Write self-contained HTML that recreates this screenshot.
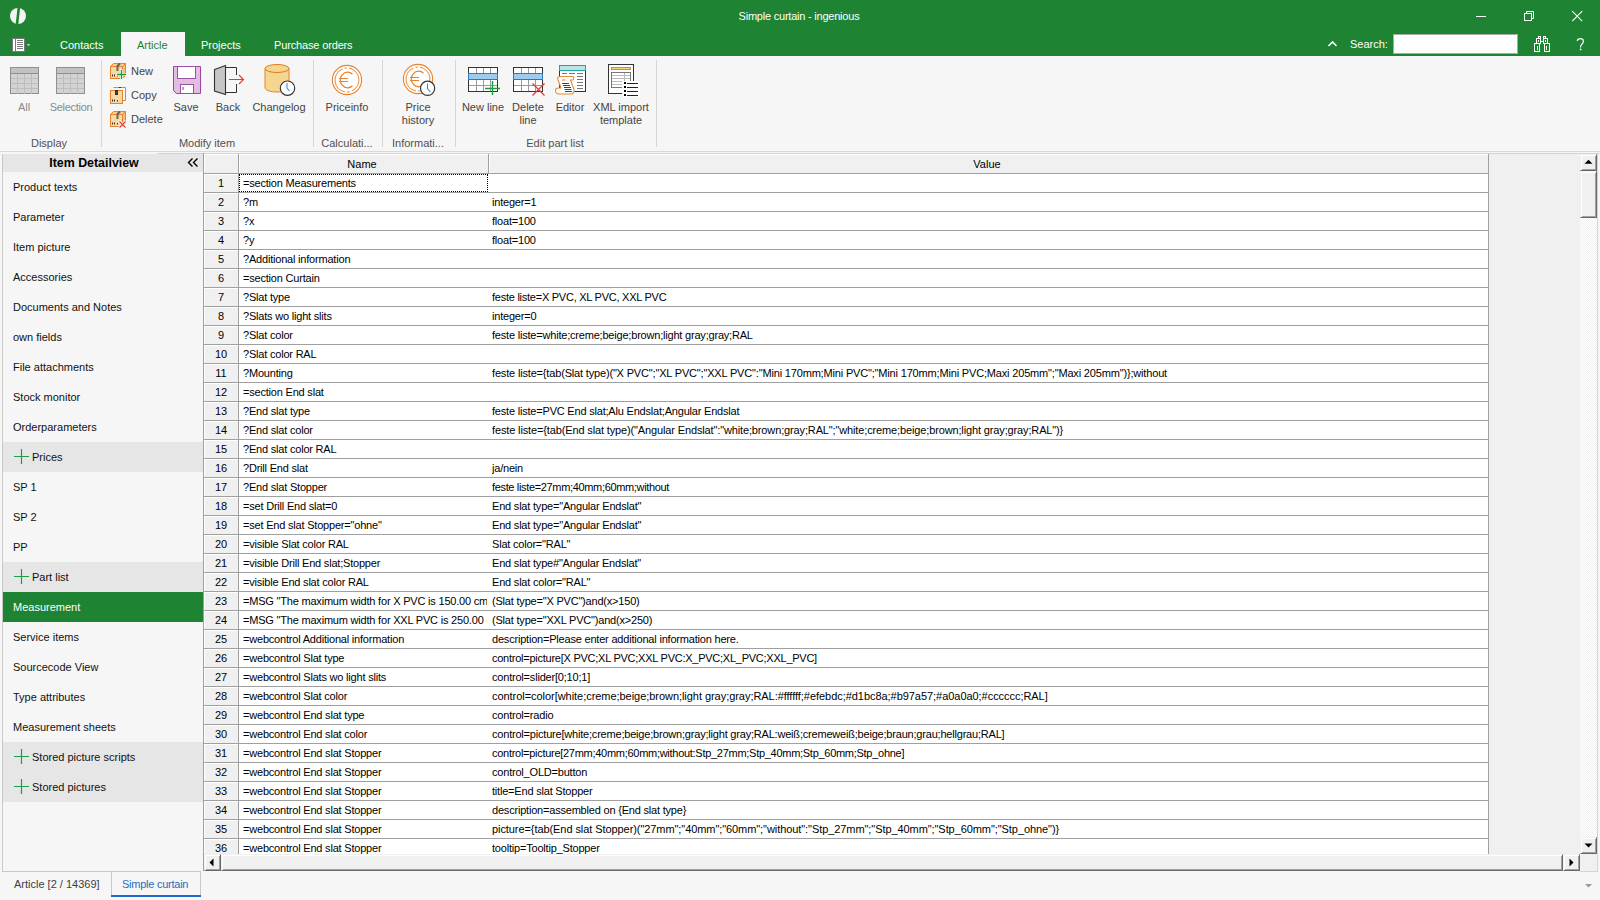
<!DOCTYPE html><html><head><meta charset="utf-8"><style>
html,body{margin:0;padding:0}
body{width:1600px;height:900px;overflow:hidden;position:relative;background:#f6f6f6;font-family:"Liberation Sans", sans-serif;font-size:11px;color:#000}
div{box-sizing:border-box}
.g{position:absolute;height:18px;line-height:18px;white-space:pre;overflow:hidden;color:#000}
.c{letter-spacing:-0.2px}
.t{position:absolute;white-space:pre;line-height:14px}
svg{position:absolute;overflow:visible}

</style></head><body>
<div style="position:absolute;left:0px;top:0px;width:1600px;height:56px;background:#1e8332"></div>
<svg style="left:0;top:0" width="40" height="32"><circle cx="18" cy="16" r="8" fill="#f4f4f4"/><path d="M17.6 7 L20.2 7 L18.2 25 L15.6 25 Z" fill="#1e8332"/></svg>
<div class="t" style="left:0px;top:9px;width:1598px;text-align:center;color:#ffffff;font-size:11px;letter-spacing:-0.22px;">Simple curtain - ingenious</div>
<svg style="left:1470;top:0" width="130" height="32"><line x1="6" y1="16.5" x2="16" y2="16.5" stroke="#fff" stroke-width="1"/><rect x="54.5" y="13.5" width="7" height="7" fill="none" stroke="#fff"/><path d="M56.5 13.5 V11.5 H63.5 V18.5 H61.5" fill="none" stroke="#fff"/><path d="M102.2 11.2 L112.2 21.2 M112.2 11.2 L102.2 21.2" stroke="#fff" stroke-width="1.1"/></svg>
<svg style="left:0;top:0" width="40" height="56"><rect x="12.5" y="38.5" width="12" height="13" fill="#fff" stroke="#7a7a7a"/><rect x="12.5" y="38.5" width="3" height="13" fill="#fff" stroke="#7a7a7a"/><path d="M17 40.5h6M17 42.5h6M17 44.5h6M17 46.5h6M17 48.5h6" stroke="#7a7a7a"/><path d="M26.5 44 h4 l-2 2.5z" fill="#bbb"/></svg>
<div style="position:absolute;left:121px;top:32px;width:64px;height:24px;background:#f6f6f6"></div>
<div class="t" style="left:60px;top:38px;color:#fff">Contacts</div>
<div class="t" style="left:137px;top:38px;color:#1e8332">Article</div>
<div class="t" style="left:201px;top:38px;color:#fff">Projects</div>
<div class="t" style="left:274px;top:38px;color:#fff;letter-spacing:-0.15px">Purchase orders</div>
<svg style="left:1320;top:28" width="20" height="20"><path d="M8.5 18 L12.5 14 L16.5 18" fill="none" stroke="#fff" stroke-width="1.6"/></svg>
<div class="t" style="left:1350px;top:37px;color:#fff">Search:</div>
<div style="position:absolute;left:1393px;top:34px;width:125px;height:20px;background:#fff;border:1px solid #a9a9a9"></div>
<svg style="left:1526px;top:30px" width="30" height="26"><rect x="8.5" y="13.5" width="5" height="8" fill="none" stroke="#fff"/><rect x="18.5" y="13.5" width="5" height="8" fill="none" stroke="#fff"/><rect x="10.5" y="8.5" width="4" height="5" fill="none" stroke="#fff"/><rect x="17.5" y="8.5" width="4" height="5" fill="none" stroke="#fff"/><rect x="12.5" y="6.5" width="2" height="2" fill="none" stroke="#fff"/><rect x="17.5" y="6.5" width="2" height="2" fill="none" stroke="#fff"/><path d="M15 11.5h2" stroke="#fff"/><path d="M11.5 16v4M20.5 16v4M12.5 10v2M19.5 10v2" stroke="#fff"/></svg>
<svg style="left:1570px;top:30px" width="20" height="24"><path d="M7.2 10.8C7.8 8.3 13.4 7.4 13.4 11.3C13.4 14 10.6 14.4 10.6 16.6V17.6" fill="none" stroke="#fff" stroke-width="1.2"/><circle cx="10.6" cy="19.4" r="0.9" fill="#fff"/></svg>
<div style="position:absolute;left:0px;top:151px;width:1600px;height:1px;background:#d9d9d9"></div>
<div style="position:absolute;left:101px;top:60px;width:1px;height:87px;background:#d6d6d6"></div>
<div style="position:absolute;left:313px;top:60px;width:1px;height:87px;background:#d6d6d6"></div>
<div style="position:absolute;left:382px;top:60px;width:1px;height:87px;background:#d6d6d6"></div>
<div style="position:absolute;left:455px;top:60px;width:1px;height:87px;background:#d6d6d6"></div>
<div style="position:absolute;left:656px;top:60px;width:1px;height:87px;background:#d6d6d6"></div>
<svg style="left:10px;top:67px" width="30" height="28"><rect x="0.5" y="0.5" width="28" height="26" fill="#d3d3d3" stroke="#8f8f8f"/><rect x="1" y="1" width="27" height="5" fill="#c2c2c2"/><line x1="1" y1="6.5" x2="28" y2="6.5" stroke="#8f8f8f"/><line x1="1" y1="11.5" x2="28" y2="11.5" stroke="#bdbdbd"/><line x1="7.5" y1="7" x2="7.5" y2="27" stroke="#bdbdbd"/><line x1="1" y1="16.5" x2="28" y2="16.5" stroke="#bdbdbd"/><line x1="14.5" y1="7" x2="14.5" y2="27" stroke="#bdbdbd"/><line x1="1" y1="21.5" x2="28" y2="21.5" stroke="#bdbdbd"/><line x1="21.5" y1="7" x2="21.5" y2="27" stroke="#bdbdbd"/></svg>
<svg style="left:56px;top:67px" width="30" height="28"><rect x="0.5" y="0.5" width="28" height="26" fill="#d3d3d3" stroke="#8f8f8f"/><rect x="1" y="1" width="27" height="5" fill="#c2c2c2"/><line x1="1" y1="6.5" x2="28" y2="6.5" stroke="#8f8f8f"/><line x1="1" y1="11.5" x2="28" y2="11.5" stroke="#bdbdbd"/><line x1="7.5" y1="7" x2="7.5" y2="27" stroke="#bdbdbd"/><line x1="1" y1="16.5" x2="28" y2="16.5" stroke="#bdbdbd"/><line x1="14.5" y1="7" x2="14.5" y2="27" stroke="#bdbdbd"/><line x1="1" y1="21.5" x2="28" y2="21.5" stroke="#bdbdbd"/><line x1="21.5" y1="7" x2="21.5" y2="27" stroke="#bdbdbd"/></svg>
<div class="t" style="left:-36px;top:100px;width:120px;text-align:center;color:#8a8a8a;font-size:11px">All</div>
<div class="t" style="left:11px;top:100px;width:120px;text-align:center;color:#8a8a8a;letter-spacing:-0.3px">Selection</div>
<div class="t" style="left:-11px;top:136px;width:120px;text-align:center;color:#505050;font-size:11px">Display</div>
<svg style="left:108px;top:61px" width="20" height="20"><path d="M2.5 5.5l3-3h12l-3 3z" fill="#f6cf8c" stroke="#e8822e"/><path d="M14.5 5.5l3-3v12l-3 3z" fill="#f3c27a" stroke="#e8822e"/><rect x="2.5" y="5.5" width="12" height="12" fill="#f8d9a0" stroke="#e8822e"/><path d="M12 2.5L9.5 5v5" fill="none" stroke="#666" stroke-width="2"/><path d="M4.5 13.5v2M6.5 13.5v2M9.5 14v1.5" stroke="#333"/><path d="M13.5 8.5v10M8.5 13.5h10" stroke="#f6f6f6" stroke-width="3"/><path d="M13.5 9v9M9 13.5h9" stroke="#1a9c3a" stroke-width="1.3"/></svg>
<svg style="left:108px;top:86px" width="20" height="20"><path d="M5.5 1.5h12v13h-3" fill="none" stroke="#e8822e"/><rect x="2.5" y="4.5" width="12" height="13" fill="#f8d9a0" stroke="#e8822e"/><rect x="7.5" y="4.5" width="2" height="4" fill="#444" stroke="#333"/><path d="M11 1.5h2" stroke="#333"/><path d="M4.5 13.5v2M6.5 13.5v2M9.5 14v1.5" stroke="#333"/></svg>
<svg style="left:108px;top:109px" width="20" height="20"><path d="M2.5 5.5l3-3h12l-3 3z" fill="#f6cf8c" stroke="#e8822e"/><path d="M14.5 5.5l3-3v12l-3 3z" fill="#f3c27a" stroke="#e8822e"/><rect x="2.5" y="5.5" width="12" height="12" fill="#f8d9a0" stroke="#e8822e"/><path d="M12 2.5L9.5 5v5" fill="none" stroke="#666" stroke-width="2"/><path d="M4.5 13.5v2M6.5 13.5v2M9.5 14v1.5" stroke="#333"/><path d="M11 12l7 7M18 12l-7 7" stroke="#f6f6f6" stroke-width="3"/><path d="M11.5 12.5l6 6M17.5 12.5l-6 6" stroke="#e53935" stroke-width="1.1"/></svg>
<div class="t" style="left:131px;top:64px;color:#444444">New</div>
<div class="t" style="left:131px;top:88px;color:#444444">Copy</div>
<div class="t" style="left:131px;top:112px;color:#444444">Delete</div>
<svg style="left:173px;top:66px" width="30" height="30"><path d="M0.5 0.5h27v27h-24l-3-3z" fill="#e2bde0" stroke="#a044a4"/><rect x="4.5" y="0.5" width="18" height="12" fill="#fff" stroke="#9b4fa8"/><rect x="7.5" y="18.5" width="13" height="9" fill="#fff" stroke="#9b4fa8"/><line x1="10" y1="21" x2="10" y2="24" stroke="#555"/></svg>
<div class="t" style="left:126px;top:100px;width:120px;text-align:center;color:#444444;font-size:11px">Save</div>
<svg style="left:213px;top:64px" width="34" height="34"><path d="M1.5 5.5L12.5 1.5V30.5L1.5 27z" fill="#c6c6c6" stroke="#333" stroke-width="1.1"/><path d="M13 3.5H23.5V11M23.5 20V28.5H13" fill="none" stroke="#333"/><path d="M16 15.5H30.5M26 11L30.5 15.5 26 20" fill="none" stroke="#e53935" stroke-width="1.1"/></svg>
<div class="t" style="left:168px;top:100px;width:120px;text-align:center;color:#444444;font-size:11px">Back</div>
<svg style="left:264px;top:63px" width="34" height="34"><path d="M1 5.5v19c0 3 6 4.5 12 4.5s12-1.5 12-4.5v-19" fill="#f5d68e" stroke="#e8822e"/><ellipse cx="13" cy="5.5" rx="12" ry="4" fill="#f5d68e" stroke="#e07b20"/><circle cx="23.5" cy="25.2" r="7.2" fill="#fff" stroke="#333" stroke-width="1.2"/><path d="M23 20v5l2.5 2.8" fill="none" stroke="#3a8ee6" stroke-width="1.1"/></svg>
<div class="t" style="left:219px;top:100px;width:120px;text-align:center;color:#444444;font-size:11px">Changelog</div>
<div class="t" style="left:147px;top:136px;width:120px;text-align:center;color:#505050;font-size:11px">Modify item</div>
<svg style="left:330px;top:63px" width="34" height="34"><circle cx="17" cy="17" r="14.6" fill="#fff" stroke="#e8822e" stroke-width="1.1"/><circle cx="17" cy="17" r="12" fill="none" stroke="#e8822e" stroke-width="0.9" stroke-dasharray="30.7 2 3 2" stroke-dashoffset="-4" transform="rotate(-100 17 17)"/><path d="M22.5 11.2A7.3 7.8 0 1 0 22.5 22.8" fill="none" stroke="#e8822e" stroke-width="1.3"/><path d="M9 15.5h9M9 18.5h9" stroke="#e8822e" stroke-width="1.2"/></svg>
<div class="t" style="left:287px;top:100px;width:120px;text-align:center;color:#444444;font-size:11px">Priceinfo</div>
<div class="t" style="left:287px;top:136px;width:120px;text-align:center;color:#505050;font-size:11px">Calculati...</div>
<svg style="left:401px;top:62px" width="34" height="34"><circle cx="17" cy="17" r="14.6" fill="#fff" stroke="#e8822e" stroke-width="1.1"/><circle cx="17" cy="17" r="12" fill="none" stroke="#e8822e" stroke-width="0.9" stroke-dasharray="30.7 2 3 2" stroke-dashoffset="-4" transform="rotate(-100 17 17)"/><path d="M22.5 11.2A7.3 7.8 0 1 0 22.5 22.8" fill="none" stroke="#e8822e" stroke-width="1.3"/><path d="M9 15.5h9M9 18.5h9" stroke="#e8822e" stroke-width="1.2"/></svg>
<svg style="left:417px;top:78px" width="22" height="22"><circle cx="10.6" cy="10.3" r="7.1" fill="#fff" stroke="#333" stroke-width="1.2"/><path d="M10.5 5.5v5l2.8 3.5" fill="none" stroke="#2f8ad8" stroke-width="1.1"/></svg>
<div class="t" style="left:358px;top:100px;width:120px;text-align:center;color:#444444;font-size:11px">Price</div>
<div class="t" style="left:358px;top:113px;width:120px;text-align:center;color:#444444;font-size:11px">history</div>
<div class="t" style="left:358px;top:136px;width:120px;text-align:center;color:#505050;font-size:11px">Informati...</div>
<svg style="left:468px;top:67px" width="34" height="32"><rect x="0.5" y="0.5" width="29" height="24" fill="#fff" stroke="#333"/><rect x="0.5" y="6.5" width="29" height="6" fill="#9ccbf0" stroke="#2a78c8"/><line x1="8.5" y1="1" x2="8.5" y2="6" stroke="#999"/><line x1="8.5" y1="13" x2="8.5" y2="24" stroke="#999"/><line x1="15.5" y1="1" x2="15.5" y2="6" stroke="#999"/><line x1="15.5" y1="13" x2="15.5" y2="24" stroke="#999"/><line x1="22.5" y1="1" x2="22.5" y2="6" stroke="#999"/><line x1="22.5" y1="13" x2="22.5" y2="24" stroke="#999"/><line x1="1" y1="18.5" x2="29" y2="18.5" stroke="#999"/><path d="M24.5 14v14M17 21.5h15" stroke="#1a9c3a" stroke-width="1.4"/></svg>
<svg style="left:513px;top:67px" width="34" height="32"><rect x="0.5" y="0.5" width="29" height="24" fill="#fff" stroke="#333"/><rect x="0.5" y="6.5" width="29" height="6" fill="#9ccbf0" stroke="#2a78c8"/><line x1="8.5" y1="1" x2="8.5" y2="6" stroke="#999"/><line x1="8.5" y1="13" x2="8.5" y2="24" stroke="#999"/><line x1="15.5" y1="1" x2="15.5" y2="6" stroke="#999"/><line x1="15.5" y1="13" x2="15.5" y2="24" stroke="#999"/><line x1="22.5" y1="1" x2="22.5" y2="6" stroke="#999"/><line x1="22.5" y1="13" x2="22.5" y2="24" stroke="#999"/><line x1="1" y1="18.5" x2="29" y2="18.5" stroke="#999"/><path d="M19.5 16.5l12 12M31.5 16.5l-12 12" stroke="#e53935" stroke-width="1.3"/></svg>
<div class="t" style="left:423px;top:100px;width:120px;text-align:center;color:#444444;font-size:11px">New line</div>
<div class="t" style="left:468px;top:100px;width:120px;text-align:center;color:#444444;font-size:11px">Delete</div>
<div class="t" style="left:468px;top:113px;width:120px;text-align:center;color:#444444;font-size:11px">line</div>
<svg style="left:552px;top:60px" width="40" height="40"><rect x="7.5" y="5.5" width="26" height="26" fill="#fff" stroke="#333"/><rect x="7.5" y="5.5" width="26" height="5" fill="#c2e3e3" stroke="#1fa3ab"/><path d="M10 13.5h5M17 13.5h6M25 13.5h6M25 16.5h6M25 19.5h6M25 22.5h6M25 25.5h6M25 28.5h6" stroke="#777"/><path d="M9 16.5h11.5c1.5 0 2 3 0 3.5h-2l3.5 9.5c0.7 2.5-1 4.5-3 4.5h-12c-2 0-3.5-1.5-3.5-3.5s1.5-2.5 3-2.5h2.5l-3-8c-1-2.5 0-3.5 3-3.5z" fill="#fff" stroke="#ea8a35" stroke-width="1.1"/><path d="M10 20h3.5" stroke="#ea8a35"/><path d="M10 23.5h7M11 25.5h7M12 27.5h7M12.5 29.5h7M13 31.5h7" stroke="#444"/></svg>
<div class="t" style="left:510px;top:100px;width:120px;text-align:center;color:#444444;font-size:11px">Editor</div>
<svg style="left:604px;top:60px" width="40" height="40"><rect x="4.5" y="4.5" width="25" height="29" fill="#fff" stroke="#333"/><rect x="7.5" y="7.5" width="19" height="2" fill="#f6d47a" stroke="#e8822e"/><rect x="7.5" y="12.5" width="19" height="15" fill="#fff" stroke="#777"/><path d="M8 15.5h18M8 18.5h18M8 21.5h18M8 24.5h18M20.5 13v14" stroke="#bbb"/><rect x="18" y="21" width="18" height="16" fill="#fff"/><path d="M20 23h2M20 27h2M20 31h2M20 35h2" stroke="#000" stroke-width="2"/><path d="M23 23.5h11M23 27.5h11M23 31.5h11M23 35.5h11" stroke="#222"/></svg>
<div class="t" style="left:561px;top:100px;width:120px;text-align:center;color:#444444;font-size:11px">XML import</div>
<div class="t" style="left:561px;top:113px;width:120px;text-align:center;color:#444444;font-size:11px">template</div>
<div class="t" style="left:495px;top:136px;width:120px;text-align:center;color:#505050;font-size:11px">Edit part list</div>
<div style="position:absolute;left:157px;top:153px;width:1443px;height:1px;background:#d4d4d4"></div>
<div style="position:absolute;left:2px;top:154px;width:1px;height:718px;background:#c8c8c8"></div>
<div style="position:absolute;left:2px;top:871px;width:110px;height:1px;background:#c8c8c8"></div>
<div style="position:absolute;left:3px;top:154px;width:200px;height:18px;background:#e6e6e6"></div>
<div class="t" style="left:3px;top:156px;width:182px;text-align:center;font-weight:bold;font-size:12.4px;color:#000">Item Detailview</div>
<svg style="left:186px;top:156px" width="14" height="14"><path d="M6.5 2.5L2.5 6.5 6.5 10.5M11.5 2.5L7.5 6.5 11.5 10.5" fill="none" stroke="#000" stroke-width="1.4"/></svg>
<div class="t" style="left:13px;top:180px;color:#111">Product texts</div>
<div class="t" style="left:13px;top:210px;color:#111">Parameter</div>
<div class="t" style="left:13px;top:240px;color:#111">Item picture</div>
<div class="t" style="left:13px;top:270px;color:#111">Accessories</div>
<div class="t" style="left:13px;top:300px;color:#111">Documents and Notes</div>
<div class="t" style="left:13px;top:330px;color:#111">own fields</div>
<div class="t" style="left:13px;top:360px;color:#111">File attachments</div>
<div class="t" style="left:13px;top:390px;color:#111">Stock monitor</div>
<div class="t" style="left:13px;top:420px;color:#111">Orderparameters</div>
<div style="position:absolute;left:3px;top:442px;width:200px;height:30px;background:#e6e6e6"></div>
<svg style="left:14px;top:449px" width="16" height="16"><path d="M7.5 0v15M0 7.5h15" stroke="#1fa048" stroke-width="1.2"/></svg>
<div class="t" style="left:32px;top:450px;color:#111">Prices</div>
<div class="t" style="left:13px;top:480px;color:#111">SP 1</div>
<div class="t" style="left:13px;top:510px;color:#111">SP 2</div>
<div class="t" style="left:13px;top:540px;color:#111">PP</div>
<div style="position:absolute;left:3px;top:562px;width:200px;height:30px;background:#e6e6e6"></div>
<svg style="left:14px;top:569px" width="16" height="16"><path d="M7.5 0v15M0 7.5h15" stroke="#1fa048" stroke-width="1.2"/></svg>
<div class="t" style="left:32px;top:570px;color:#111">Part list</div>
<div style="position:absolute;left:3px;top:592px;width:200px;height:30px;background:#1e8332"></div>
<div class="t" style="left:13px;top:600px;color:#fff">Measurement</div>
<div class="t" style="left:13px;top:630px;color:#111">Service items</div>
<div class="t" style="left:13px;top:660px;color:#111">Sourcecode View</div>
<div class="t" style="left:13px;top:690px;color:#111">Type attributes</div>
<div class="t" style="left:13px;top:720px;color:#111">Measurement sheets</div>
<div style="position:absolute;left:3px;top:742px;width:200px;height:30px;background:#e6e6e6"></div>
<svg style="left:14px;top:749px" width="16" height="16"><path d="M7.5 0v15M0 7.5h15" stroke="#1fa048" stroke-width="1.2"/></svg>
<div class="t" style="left:32px;top:750px;color:#111">Stored picture scripts</div>
<div style="position:absolute;left:3px;top:772px;width:200px;height:30px;background:#e6e6e6"></div>
<svg style="left:14px;top:779px" width="16" height="16"><path d="M7.5 0v15M0 7.5h15" stroke="#1fa048" stroke-width="1.2"/></svg>
<div class="t" style="left:32px;top:780px;color:#111">Stored pictures</div>
<div style="position:absolute;left:203px;top:153px;width:1px;height:718px;background:#a0a0a0"></div>
<div style="position:absolute;left:1488px;top:154px;width:92px;height:700px;background:#f0f0f0"></div>
<div style="position:absolute;left:204px;top:154px;width:1284px;height:19px;background:#f0f0f0"></div>
<div style="position:absolute;left:204px;top:154px;width:34px;height:1px;background:#fff"></div>
<div style="position:absolute;left:204px;top:154px;width:1px;height:19px;background:#fff"></div>
<div style="position:absolute;left:239px;top:154px;width:249px;height:1px;background:#fff"></div>
<div style="position:absolute;left:239px;top:154px;width:1px;height:19px;background:#fff"></div>
<div style="position:absolute;left:489px;top:154px;width:999px;height:1px;background:#fff"></div>
<div style="position:absolute;left:489px;top:154px;width:1px;height:19px;background:#fff"></div>
<div style="position:absolute;left:238px;top:154px;width:1px;height:700px;background:#a0a0a0"></div>
<div style="position:absolute;left:488px;top:154px;width:1px;height:700px;background:#a0a0a0"></div>
<div style="position:absolute;left:1488px;top:154px;width:1px;height:700px;background:#a0a0a0"></div>
<div class="t" style="left:239px;top:157px;width:246px;text-align:center;color:#000">Name</div>
<div class="t" style="left:489px;top:157px;width:996px;text-align:center;color:#000">Value</div>
<div style="position:absolute;left:204px;top:173px;width:1284px;height:1px;background:#a0a0a0"></div>
<div style="position:absolute;left:239px;top:174px;width:1249px;height:680px;background:#fff"></div>
<div style="position:absolute;left:204px;top:174px;width:34px;height:680px;background:#f0f0f0"></div>
<div style="position:absolute;left:204px;top:192px;width:1284px;height:1px;background:#a0a0a0"></div>
<div style="position:absolute;left:204px;top:174px;width:34px;height:1px;background:#fff"></div>
<div style="position:absolute;left:204px;top:174px;width:1px;height:18px;background:#fff"></div>
<div class="g" style="left:204px;top:174px;width:34px;text-align:center">1</div>
<div class="g c" style="left:243px;top:174px;width:244px">=section Measurements</div>
<div style="position:absolute;left:204px;top:211px;width:1284px;height:1px;background:#a0a0a0"></div>
<div style="position:absolute;left:204px;top:193px;width:34px;height:1px;background:#fff"></div>
<div style="position:absolute;left:204px;top:193px;width:1px;height:18px;background:#fff"></div>
<div class="g" style="left:204px;top:193px;width:34px;text-align:center">2</div>
<div class="g c" style="left:243px;top:193px;width:244px">?m</div>
<div class="g c" style="left:492px;top:193px;width:994px;letter-spacing:-0.2px">integer=1</div>
<div style="position:absolute;left:204px;top:230px;width:1284px;height:1px;background:#a0a0a0"></div>
<div style="position:absolute;left:204px;top:212px;width:34px;height:1px;background:#fff"></div>
<div style="position:absolute;left:204px;top:212px;width:1px;height:18px;background:#fff"></div>
<div class="g" style="left:204px;top:212px;width:34px;text-align:center">3</div>
<div class="g c" style="left:243px;top:212px;width:244px">?x</div>
<div class="g c" style="left:492px;top:212px;width:994px;letter-spacing:-0.2px">float=100</div>
<div style="position:absolute;left:204px;top:249px;width:1284px;height:1px;background:#a0a0a0"></div>
<div style="position:absolute;left:204px;top:231px;width:34px;height:1px;background:#fff"></div>
<div style="position:absolute;left:204px;top:231px;width:1px;height:18px;background:#fff"></div>
<div class="g" style="left:204px;top:231px;width:34px;text-align:center">4</div>
<div class="g c" style="left:243px;top:231px;width:244px">?y</div>
<div class="g c" style="left:492px;top:231px;width:994px;letter-spacing:-0.2px">float=100</div>
<div style="position:absolute;left:204px;top:268px;width:1284px;height:1px;background:#a0a0a0"></div>
<div style="position:absolute;left:204px;top:250px;width:34px;height:1px;background:#fff"></div>
<div style="position:absolute;left:204px;top:250px;width:1px;height:18px;background:#fff"></div>
<div class="g" style="left:204px;top:250px;width:34px;text-align:center">5</div>
<div class="g c" style="left:243px;top:250px;width:244px">?Additional information</div>
<div style="position:absolute;left:204px;top:287px;width:1284px;height:1px;background:#a0a0a0"></div>
<div style="position:absolute;left:204px;top:269px;width:34px;height:1px;background:#fff"></div>
<div style="position:absolute;left:204px;top:269px;width:1px;height:18px;background:#fff"></div>
<div class="g" style="left:204px;top:269px;width:34px;text-align:center">6</div>
<div class="g c" style="left:243px;top:269px;width:244px">=section Curtain</div>
<div style="position:absolute;left:204px;top:306px;width:1284px;height:1px;background:#a0a0a0"></div>
<div style="position:absolute;left:204px;top:288px;width:34px;height:1px;background:#fff"></div>
<div style="position:absolute;left:204px;top:288px;width:1px;height:18px;background:#fff"></div>
<div class="g" style="left:204px;top:288px;width:34px;text-align:center">7</div>
<div class="g c" style="left:243px;top:288px;width:244px">?Slat type</div>
<div class="g c" style="left:492px;top:288px;width:994px;letter-spacing:-0.25px">feste liste=X PVC, XL PVC, XXL PVC</div>
<div style="position:absolute;left:204px;top:325px;width:1284px;height:1px;background:#a0a0a0"></div>
<div style="position:absolute;left:204px;top:307px;width:34px;height:1px;background:#fff"></div>
<div style="position:absolute;left:204px;top:307px;width:1px;height:18px;background:#fff"></div>
<div class="g" style="left:204px;top:307px;width:34px;text-align:center">8</div>
<div class="g c" style="left:243px;top:307px;width:244px">?Slats wo light slits</div>
<div class="g c" style="left:492px;top:307px;width:994px;letter-spacing:-0.2px">integer=0</div>
<div style="position:absolute;left:204px;top:344px;width:1284px;height:1px;background:#a0a0a0"></div>
<div style="position:absolute;left:204px;top:326px;width:34px;height:1px;background:#fff"></div>
<div style="position:absolute;left:204px;top:326px;width:1px;height:18px;background:#fff"></div>
<div class="g" style="left:204px;top:326px;width:34px;text-align:center">9</div>
<div class="g c" style="left:243px;top:326px;width:244px">?Slat color</div>
<div class="g c" style="left:492px;top:326px;width:994px;letter-spacing:-0.2px">feste liste=white;creme;beige;brown;light gray;gray;RAL</div>
<div style="position:absolute;left:204px;top:363px;width:1284px;height:1px;background:#a0a0a0"></div>
<div style="position:absolute;left:204px;top:345px;width:34px;height:1px;background:#fff"></div>
<div style="position:absolute;left:204px;top:345px;width:1px;height:18px;background:#fff"></div>
<div class="g" style="left:204px;top:345px;width:34px;text-align:center">10</div>
<div class="g c" style="left:243px;top:345px;width:244px">?Slat color RAL</div>
<div style="position:absolute;left:204px;top:382px;width:1284px;height:1px;background:#a0a0a0"></div>
<div style="position:absolute;left:204px;top:364px;width:34px;height:1px;background:#fff"></div>
<div style="position:absolute;left:204px;top:364px;width:1px;height:18px;background:#fff"></div>
<div class="g" style="left:204px;top:364px;width:34px;text-align:center">11</div>
<div class="g c" style="left:243px;top:364px;width:244px">?Mounting</div>
<div class="g c" style="left:492px;top:364px;width:994px;letter-spacing:-0.17px">feste liste={tab(Slat type)(&quot;X PVC&quot;;&quot;XL PVC&quot;;&quot;XXL PVC&quot;:&quot;Mini 170mm;Mini PVC&quot;;&quot;Mini 170mm;Mini PVC;Maxi 205mm&quot;;&quot;Maxi 205mm&quot;)};without</div>
<div style="position:absolute;left:204px;top:401px;width:1284px;height:1px;background:#a0a0a0"></div>
<div style="position:absolute;left:204px;top:383px;width:34px;height:1px;background:#fff"></div>
<div style="position:absolute;left:204px;top:383px;width:1px;height:18px;background:#fff"></div>
<div class="g" style="left:204px;top:383px;width:34px;text-align:center">12</div>
<div class="g c" style="left:243px;top:383px;width:244px">=section End slat</div>
<div style="position:absolute;left:204px;top:420px;width:1284px;height:1px;background:#a0a0a0"></div>
<div style="position:absolute;left:204px;top:402px;width:34px;height:1px;background:#fff"></div>
<div style="position:absolute;left:204px;top:402px;width:1px;height:18px;background:#fff"></div>
<div class="g" style="left:204px;top:402px;width:34px;text-align:center">13</div>
<div class="g c" style="left:243px;top:402px;width:244px">?End slat type</div>
<div class="g c" style="left:492px;top:402px;width:994px;letter-spacing:-0.2px">feste liste=PVC End slat;Alu Endslat;Angular Endslat</div>
<div style="position:absolute;left:204px;top:439px;width:1284px;height:1px;background:#a0a0a0"></div>
<div style="position:absolute;left:204px;top:421px;width:34px;height:1px;background:#fff"></div>
<div style="position:absolute;left:204px;top:421px;width:1px;height:18px;background:#fff"></div>
<div class="g" style="left:204px;top:421px;width:34px;text-align:center">14</div>
<div class="g c" style="left:243px;top:421px;width:244px">?End slat color</div>
<div class="g c" style="left:492px;top:421px;width:994px;letter-spacing:-0.136px">feste liste={tab(End slat type)(&quot;Angular Endslat&quot;:&quot;white;brown;gray;RAL&quot;;&quot;white;creme;beige;brown;light gray;gray;RAL&quot;)}</div>
<div style="position:absolute;left:204px;top:458px;width:1284px;height:1px;background:#a0a0a0"></div>
<div style="position:absolute;left:204px;top:440px;width:34px;height:1px;background:#fff"></div>
<div style="position:absolute;left:204px;top:440px;width:1px;height:18px;background:#fff"></div>
<div class="g" style="left:204px;top:440px;width:34px;text-align:center">15</div>
<div class="g c" style="left:243px;top:440px;width:244px">?End slat color RAL</div>
<div style="position:absolute;left:204px;top:477px;width:1284px;height:1px;background:#a0a0a0"></div>
<div style="position:absolute;left:204px;top:459px;width:34px;height:1px;background:#fff"></div>
<div style="position:absolute;left:204px;top:459px;width:1px;height:18px;background:#fff"></div>
<div class="g" style="left:204px;top:459px;width:34px;text-align:center">16</div>
<div class="g c" style="left:243px;top:459px;width:244px">?Drill End slat</div>
<div class="g c" style="left:492px;top:459px;width:994px;letter-spacing:-0.2px">ja/nein</div>
<div style="position:absolute;left:204px;top:496px;width:1284px;height:1px;background:#a0a0a0"></div>
<div style="position:absolute;left:204px;top:478px;width:34px;height:1px;background:#fff"></div>
<div style="position:absolute;left:204px;top:478px;width:1px;height:18px;background:#fff"></div>
<div class="g" style="left:204px;top:478px;width:34px;text-align:center">17</div>
<div class="g c" style="left:243px;top:478px;width:244px">?End slat Stopper</div>
<div class="g c" style="left:492px;top:478px;width:994px;letter-spacing:-0.34px">feste liste=27mm;40mm;60mm;without</div>
<div style="position:absolute;left:204px;top:515px;width:1284px;height:1px;background:#a0a0a0"></div>
<div style="position:absolute;left:204px;top:497px;width:34px;height:1px;background:#fff"></div>
<div style="position:absolute;left:204px;top:497px;width:1px;height:18px;background:#fff"></div>
<div class="g" style="left:204px;top:497px;width:34px;text-align:center">18</div>
<div class="g c" style="left:243px;top:497px;width:244px">=set Drill End slat=0</div>
<div class="g c" style="left:492px;top:497px;width:994px;letter-spacing:-0.2px">End slat type=&quot;Angular Endslat&quot;</div>
<div style="position:absolute;left:204px;top:534px;width:1284px;height:1px;background:#a0a0a0"></div>
<div style="position:absolute;left:204px;top:516px;width:34px;height:1px;background:#fff"></div>
<div style="position:absolute;left:204px;top:516px;width:1px;height:18px;background:#fff"></div>
<div class="g" style="left:204px;top:516px;width:34px;text-align:center">19</div>
<div class="g c" style="left:243px;top:516px;width:244px">=set End slat Stopper=&quot;ohne&quot;</div>
<div class="g c" style="left:492px;top:516px;width:994px;letter-spacing:-0.2px">End slat type=&quot;Angular Endslat&quot;</div>
<div style="position:absolute;left:204px;top:553px;width:1284px;height:1px;background:#a0a0a0"></div>
<div style="position:absolute;left:204px;top:535px;width:34px;height:1px;background:#fff"></div>
<div style="position:absolute;left:204px;top:535px;width:1px;height:18px;background:#fff"></div>
<div class="g" style="left:204px;top:535px;width:34px;text-align:center">20</div>
<div class="g c" style="left:243px;top:535px;width:244px">=visible Slat color RAL</div>
<div class="g c" style="left:492px;top:535px;width:994px;letter-spacing:-0.2px">Slat color=&quot;RAL&quot;</div>
<div style="position:absolute;left:204px;top:572px;width:1284px;height:1px;background:#a0a0a0"></div>
<div style="position:absolute;left:204px;top:554px;width:34px;height:1px;background:#fff"></div>
<div style="position:absolute;left:204px;top:554px;width:1px;height:18px;background:#fff"></div>
<div class="g" style="left:204px;top:554px;width:34px;text-align:center">21</div>
<div class="g c" style="left:243px;top:554px;width:244px">=visible Drill End slat;Stopper</div>
<div class="g c" style="left:492px;top:554px;width:994px;letter-spacing:-0.2px">End slat type#&quot;Angular Endslat&quot;</div>
<div style="position:absolute;left:204px;top:591px;width:1284px;height:1px;background:#a0a0a0"></div>
<div style="position:absolute;left:204px;top:573px;width:34px;height:1px;background:#fff"></div>
<div style="position:absolute;left:204px;top:573px;width:1px;height:18px;background:#fff"></div>
<div class="g" style="left:204px;top:573px;width:34px;text-align:center">22</div>
<div class="g c" style="left:243px;top:573px;width:244px">=visible End slat color RAL</div>
<div class="g c" style="left:492px;top:573px;width:994px;letter-spacing:-0.2px">End slat color=&quot;RAL&quot;</div>
<div style="position:absolute;left:204px;top:610px;width:1284px;height:1px;background:#a0a0a0"></div>
<div style="position:absolute;left:204px;top:592px;width:34px;height:1px;background:#fff"></div>
<div style="position:absolute;left:204px;top:592px;width:1px;height:18px;background:#fff"></div>
<div class="g" style="left:204px;top:592px;width:34px;text-align:center">23</div>
<div class="g c" style="left:243px;top:592px;width:244px">=MSG &quot;The maximum width for X PVC is 150.00 cm</div>
<div class="g c" style="left:492px;top:592px;width:994px;letter-spacing:-0.2px">(Slat type=&quot;X PVC&quot;)and(x&gt;150)</div>
<div style="position:absolute;left:204px;top:629px;width:1284px;height:1px;background:#a0a0a0"></div>
<div style="position:absolute;left:204px;top:611px;width:34px;height:1px;background:#fff"></div>
<div style="position:absolute;left:204px;top:611px;width:1px;height:18px;background:#fff"></div>
<div class="g" style="left:204px;top:611px;width:34px;text-align:center">24</div>
<div class="g c" style="left:243px;top:611px;width:244px">=MSG &quot;The maximum width for XXL PVC is 250.00 cm</div>
<div class="g c" style="left:492px;top:611px;width:994px;letter-spacing:-0.2px">(Slat type=&quot;XXL PVC&quot;)and(x&gt;250)</div>
<div style="position:absolute;left:204px;top:648px;width:1284px;height:1px;background:#a0a0a0"></div>
<div style="position:absolute;left:204px;top:630px;width:34px;height:1px;background:#fff"></div>
<div style="position:absolute;left:204px;top:630px;width:1px;height:18px;background:#fff"></div>
<div class="g" style="left:204px;top:630px;width:34px;text-align:center">25</div>
<div class="g c" style="left:243px;top:630px;width:244px">=webcontrol Additional information</div>
<div class="g c" style="left:492px;top:630px;width:994px;letter-spacing:-0.2px">description=Please enter additional information here.</div>
<div style="position:absolute;left:204px;top:667px;width:1284px;height:1px;background:#a0a0a0"></div>
<div style="position:absolute;left:204px;top:649px;width:34px;height:1px;background:#fff"></div>
<div style="position:absolute;left:204px;top:649px;width:1px;height:18px;background:#fff"></div>
<div class="g" style="left:204px;top:649px;width:34px;text-align:center">26</div>
<div class="g c" style="left:243px;top:649px;width:244px">=webcontrol Slat type</div>
<div class="g c" style="left:492px;top:649px;width:994px;letter-spacing:-0.25px">control=picture[X PVC;XL PVC;XXL PVC:X_PVC;XL_PVC;XXL_PVC]</div>
<div style="position:absolute;left:204px;top:686px;width:1284px;height:1px;background:#a0a0a0"></div>
<div style="position:absolute;left:204px;top:668px;width:34px;height:1px;background:#fff"></div>
<div style="position:absolute;left:204px;top:668px;width:1px;height:18px;background:#fff"></div>
<div class="g" style="left:204px;top:668px;width:34px;text-align:center">27</div>
<div class="g c" style="left:243px;top:668px;width:244px">=webcontrol Slats wo light slits</div>
<div class="g c" style="left:492px;top:668px;width:994px;letter-spacing:-0.2px">control=slider[0;10;1]</div>
<div style="position:absolute;left:204px;top:705px;width:1284px;height:1px;background:#a0a0a0"></div>
<div style="position:absolute;left:204px;top:687px;width:34px;height:1px;background:#fff"></div>
<div style="position:absolute;left:204px;top:687px;width:1px;height:18px;background:#fff"></div>
<div class="g" style="left:204px;top:687px;width:34px;text-align:center">28</div>
<div class="g c" style="left:243px;top:687px;width:244px">=webcontrol Slat color</div>
<div class="g c" style="left:492px;top:687px;width:994px;letter-spacing:-0.045px">control=color[white;creme;beige;brown;light gray;gray;RAL:#ffffff;#efebdc;#d1bc8a;#b97a57;#a0a0a0;#cccccc;RAL]</div>
<div style="position:absolute;left:204px;top:724px;width:1284px;height:1px;background:#a0a0a0"></div>
<div style="position:absolute;left:204px;top:706px;width:34px;height:1px;background:#fff"></div>
<div style="position:absolute;left:204px;top:706px;width:1px;height:18px;background:#fff"></div>
<div class="g" style="left:204px;top:706px;width:34px;text-align:center">29</div>
<div class="g c" style="left:243px;top:706px;width:244px">=webcontrol End slat type</div>
<div class="g c" style="left:492px;top:706px;width:994px;letter-spacing:-0.2px">control=radio</div>
<div style="position:absolute;left:204px;top:743px;width:1284px;height:1px;background:#a0a0a0"></div>
<div style="position:absolute;left:204px;top:725px;width:34px;height:1px;background:#fff"></div>
<div style="position:absolute;left:204px;top:725px;width:1px;height:18px;background:#fff"></div>
<div class="g" style="left:204px;top:725px;width:34px;text-align:center">30</div>
<div class="g c" style="left:243px;top:725px;width:244px">=webcontrol End slat color</div>
<div class="g c" style="left:492px;top:725px;width:994px;letter-spacing:-0.2px">control=picture[white;creme;beige;brown;gray;light gray;RAL:weiß;cremeweiß;beige;braun;grau;hellgrau;RAL]</div>
<div style="position:absolute;left:204px;top:762px;width:1284px;height:1px;background:#a0a0a0"></div>
<div style="position:absolute;left:204px;top:744px;width:34px;height:1px;background:#fff"></div>
<div style="position:absolute;left:204px;top:744px;width:1px;height:18px;background:#fff"></div>
<div class="g" style="left:204px;top:744px;width:34px;text-align:center">31</div>
<div class="g c" style="left:243px;top:744px;width:244px">=webcontrol End slat Stopper</div>
<div class="g c" style="left:492px;top:744px;width:994px;letter-spacing:-0.28px">control=picture[27mm;40mm;60mm;without:Stp_27mm;Stp_40mm;Stp_60mm;Stp_ohne]</div>
<div style="position:absolute;left:204px;top:781px;width:1284px;height:1px;background:#a0a0a0"></div>
<div style="position:absolute;left:204px;top:763px;width:34px;height:1px;background:#fff"></div>
<div style="position:absolute;left:204px;top:763px;width:1px;height:18px;background:#fff"></div>
<div class="g" style="left:204px;top:763px;width:34px;text-align:center">32</div>
<div class="g c" style="left:243px;top:763px;width:244px">=webcontrol End slat Stopper</div>
<div class="g c" style="left:492px;top:763px;width:994px;letter-spacing:-0.2px">control_OLD=button</div>
<div style="position:absolute;left:204px;top:800px;width:1284px;height:1px;background:#a0a0a0"></div>
<div style="position:absolute;left:204px;top:782px;width:34px;height:1px;background:#fff"></div>
<div style="position:absolute;left:204px;top:782px;width:1px;height:18px;background:#fff"></div>
<div class="g" style="left:204px;top:782px;width:34px;text-align:center">33</div>
<div class="g c" style="left:243px;top:782px;width:244px">=webcontrol End slat Stopper</div>
<div class="g c" style="left:492px;top:782px;width:994px;letter-spacing:-0.2px">title=End slat Stopper</div>
<div style="position:absolute;left:204px;top:819px;width:1284px;height:1px;background:#a0a0a0"></div>
<div style="position:absolute;left:204px;top:801px;width:34px;height:1px;background:#fff"></div>
<div style="position:absolute;left:204px;top:801px;width:1px;height:18px;background:#fff"></div>
<div class="g" style="left:204px;top:801px;width:34px;text-align:center">34</div>
<div class="g c" style="left:243px;top:801px;width:244px">=webcontrol End slat Stopper</div>
<div class="g c" style="left:492px;top:801px;width:994px;letter-spacing:-0.2px">description=assembled on {End slat type}</div>
<div style="position:absolute;left:204px;top:838px;width:1284px;height:1px;background:#a0a0a0"></div>
<div style="position:absolute;left:204px;top:820px;width:34px;height:1px;background:#fff"></div>
<div style="position:absolute;left:204px;top:820px;width:1px;height:18px;background:#fff"></div>
<div class="g" style="left:204px;top:820px;width:34px;text-align:center">35</div>
<div class="g c" style="left:243px;top:820px;width:244px">=webcontrol End slat Stopper</div>
<div class="g c" style="left:492px;top:820px;width:994px;letter-spacing:-0.075px">picture={tab(End slat Stopper)(&quot;27mm&quot;;&quot;40mm&quot;;&quot;60mm&quot;;&quot;without&quot;:&quot;Stp_27mm&quot;;&quot;Stp_40mm&quot;;&quot;Stp_60mm&quot;;&quot;Stp_ohne&quot;)}</div>
<div style="position:absolute;left:204px;top:857px;width:1284px;height:1px;background:#a0a0a0"></div>
<div style="position:absolute;left:204px;top:839px;width:34px;height:1px;background:#fff"></div>
<div style="position:absolute;left:204px;top:839px;width:1px;height:18px;background:#fff"></div>
<div class="g" style="left:204px;top:839px;width:34px;text-align:center">36</div>
<div class="g c" style="left:243px;top:839px;width:244px">=webcontrol End slat Stopper</div>
<div class="g c" style="left:492px;top:839px;width:994px;letter-spacing:-0.2px">tooltip=Tooltip_Stopper</div>
<div style="position:absolute;left:239px;top:174px;width:249px;height:18px;border:1px dotted #000"></div>
<div style="position:absolute;left:1580px;top:154px;width:17px;height:700px;background-color:#f0f0f0;background-image:repeating-conic-gradient(#ffffff 0 25%, #f0f0f0 0 50%);background-size:2px 2px"></div>
<div style="position:absolute;left:1580px;top:154px;width:17px;height:17px;background:#f0f0f0;border-top:1px solid #f0f0f0;border-left:1px solid #f0f0f0;border-right:1px solid #696969;border-bottom:1px solid #696969;box-shadow:inset 1px 1px 0 #fff, inset -1px -1px 0 #a0a0a0"></div>
<div style="position:absolute;left:1580px;top:171px;width:17px;height:47px;background:#f0f0f0;border-top:1px solid #f0f0f0;border-left:1px solid #f0f0f0;border-right:1px solid #696969;border-bottom:1px solid #696969;box-shadow:inset 1px 1px 0 #fff, inset -1px -1px 0 #a0a0a0"></div>
<div style="position:absolute;left:1580px;top:837px;width:17px;height:17px;background:#f0f0f0;border-top:1px solid #f0f0f0;border-left:1px solid #f0f0f0;border-right:1px solid #696969;border-bottom:1px solid #696969;box-shadow:inset 1px 1px 0 #fff, inset -1px -1px 0 #a0a0a0"></div>
<svg style="left:1580px;top:154px" width="17" height="17"><path d="M4.5 9.8h8l-4-4z" fill="#000"/></svg>
<svg style="left:1580px;top:837px" width="17" height="17"><path d="M4.5 6.5h8l-4 4z" fill="#000"/></svg>
<div style="position:absolute;left:204px;top:854px;width:1376px;height:17px;background:#f0f0f0"></div>
<div style="position:absolute;left:204px;top:854px;width:17px;height:17px;background:#f0f0f0;border-top:1px solid #f0f0f0;border-left:1px solid #f0f0f0;border-right:1px solid #696969;border-bottom:1px solid #696969;box-shadow:inset 1px 1px 0 #fff, inset -1px -1px 0 #a0a0a0"></div>
<div style="position:absolute;left:221px;top:854px;width:1342px;height:17px;background:#f0f0f0;border-top:1px solid #f0f0f0;border-left:1px solid #f0f0f0;border-right:1px solid #696969;border-bottom:1px solid #696969;box-shadow:inset 1px 1px 0 #fff, inset -1px -1px 0 #a0a0a0"></div>
<div style="position:absolute;left:1563px;top:854px;width:17px;height:17px;background:#f0f0f0;border-top:1px solid #f0f0f0;border-left:1px solid #f0f0f0;border-right:1px solid #696969;border-bottom:1px solid #696969;box-shadow:inset 1px 1px 0 #fff, inset -1px -1px 0 #a0a0a0"></div>
<svg style="left:204px;top:854px" width="17" height="17"><path d="M9.5 4.5v8l-4-4z" fill="#000"/></svg>
<svg style="left:1563px;top:854px" width="17" height="17"><path d="M6.5 4.5v8l4-4z" fill="#000"/></svg>
<div style="position:absolute;left:1580px;top:854px;width:17px;height:17px;background:#f0f0f0"></div>
<div style="position:absolute;left:1597px;top:153px;width:1px;height:719px;background:#d4d4d4"></div>
<div style="position:absolute;left:1580px;top:871px;width:18px;height:1px;background:#d4d4d4"></div>
<div class="t" style="left:14px;top:877px;color:#404040">Article [2 / 14369]</div>
<div style="position:absolute;left:111px;top:871px;width:90px;height:26px;border:1px solid #c8c8c8;border-bottom:none;background:#f6f6f6"></div>
<div style="position:absolute;left:111px;top:895px;width:90px;height:2px;background:#1e6cc8"></div>
<div class="t" style="left:122px;top:877px;color:#2a6cc0;letter-spacing:-0.25px">Simple curtain</div>
<svg style="left:1580px;top:880px" width="14" height="10"><path d="M5 4h7l-3.5 3.5z" fill="#999"/></svg>
</body></html>
